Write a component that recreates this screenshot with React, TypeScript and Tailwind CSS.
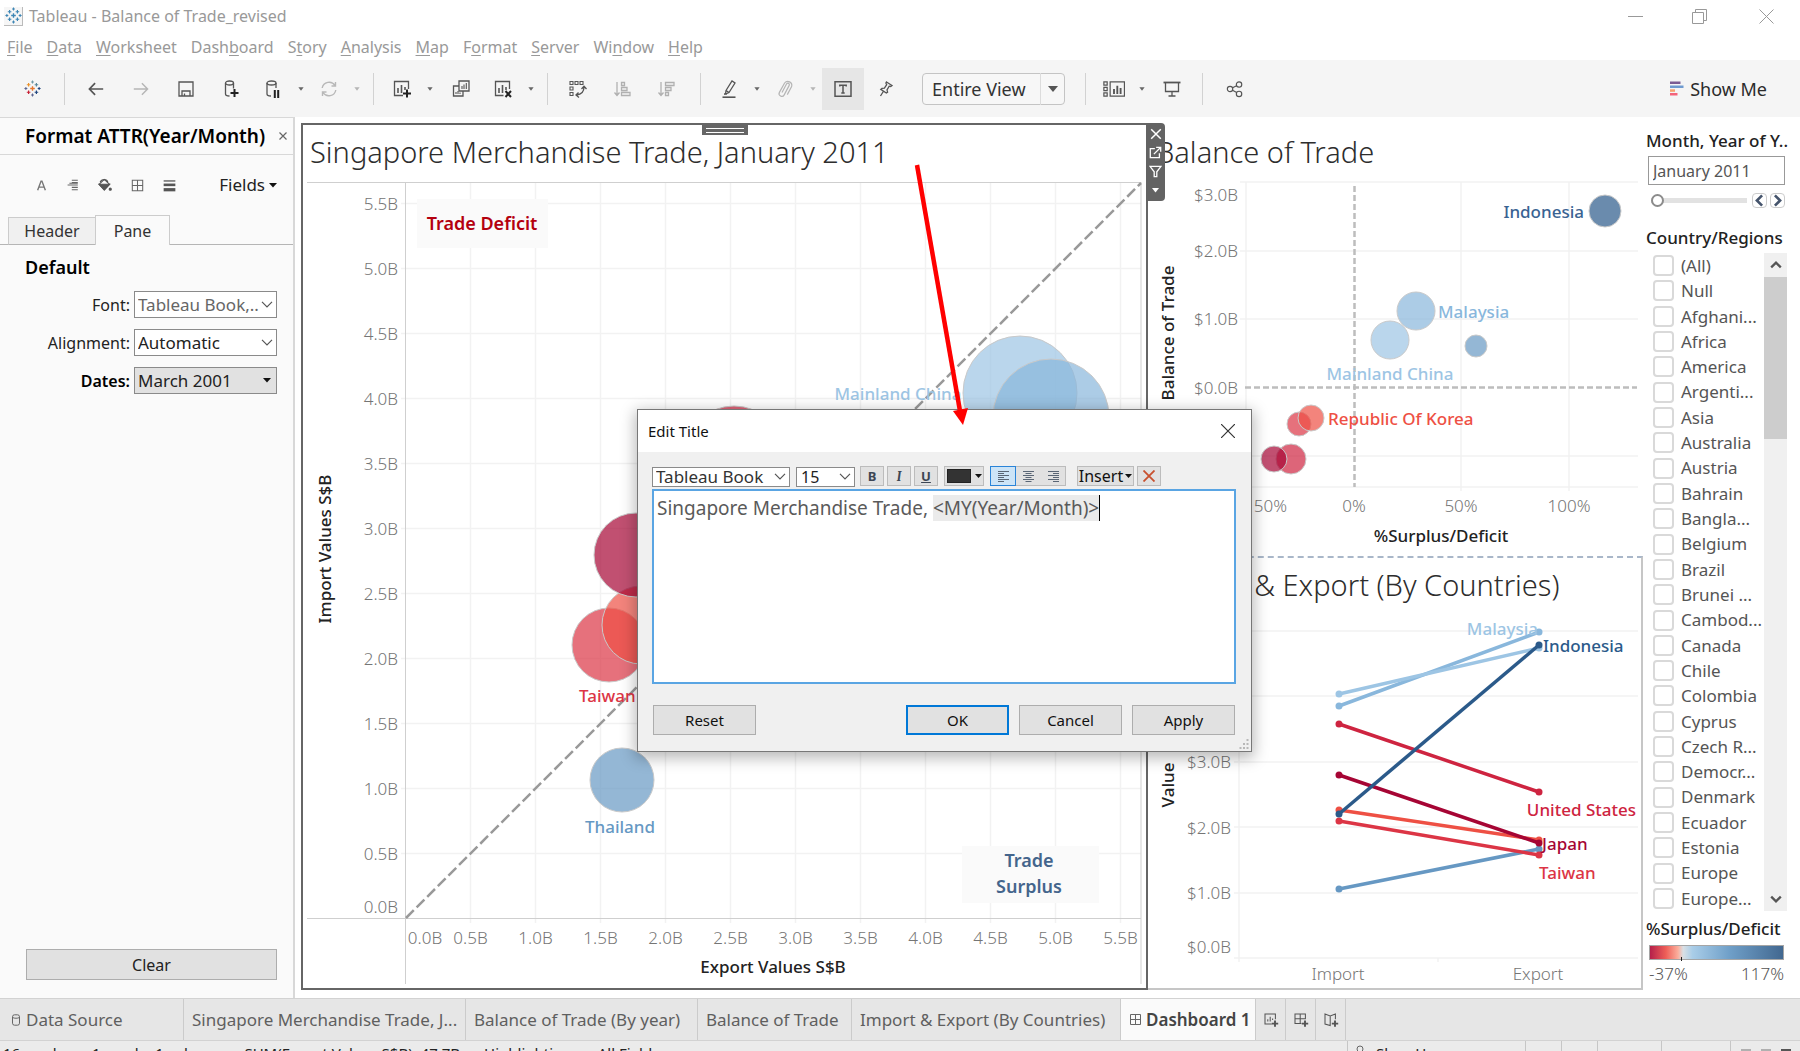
import React from "react";

const COUNTRIES = [
  "(All)", "Null", "Afghani...", "Africa", "America", "Argenti...", "Asia", "Australia", "Austria",
  "Bahrain", "Bangla...", "Belgium", "Brazil", "Brunei ...", "Cambod...", "Canada", "Chile",
  "Colombia", "Cyprus", "Czech R...", "Democr...", "Denmark", "Ecuador", "Estonia", "Europe", "Europe...",
];

const MENU: [string, string, string][] = [
  ["", "F", "ile"], ["", "D", "ata"], ["", "W", "orksheet"], ["Dash", "b", "oard"], ["S", "t", "ory"],
  ["", "A", "nalysis"], ["", "M", "ap"], ["F", "o", "rmat"], ["", "S", "erver"], ["Wi", "n", "dow"], ["", "H", "elp"],
];

type IconProps = { children: React.ReactNode; size?: number; className?: string; sw?: number };

function Icon({ children, size = 20, className = "text-[#555]", sw = 1.3 }: IconProps) {
  return (
    <svg width={size} height={size} viewBox="0 0 20 20" fill="none" stroke="currentColor" strokeWidth={sw} className={className} aria-hidden="true">
      {children}
    </svg>
  );
}

function Plus({ x, y, s, c, w = 1.6 }: { x: number; y: number; s: number; c: string; w?: number }) {
  return <path d={`M${x - s} ${y}H${x + s}M${x} ${y - s}V${y + s}`} stroke={c} strokeWidth={w} />;
}

function TableauLogo({ size, mono = false }: { size: number; mono?: boolean }) {
  const m = "#3d86b5";
  const c = (v: string) => (mono ? m : v);
  return (
    <svg width={size} height={size} viewBox="0 0 20 20" fill="none" aria-hidden="true">
      <Plus x={10} y={10} s={2.7} c={c("#e8762c")} w={1.6} />
      <Plus x={5.4} y={5.6} s={2.1} c={c("#eb9129")} w={1.4} />
      <Plus x={14.6} y={5.6} s={2.1} c={c("#59879b")} w={1.4} />
      <Plus x={5.4} y={14.4} s={2.1} c={c("#c72035")} w={1.4} />
      <Plus x={14.6} y={14.4} s={2.1} c={c("#1f447e")} w={1.4} />
      <Plus x={10} y={2.4} s={1.7} c={c("#7099a6")} w={1.2} />
      <Plus x={10} y={17.6} s={1.7} c={c("#5b6591")} w={1.2} />
      <Plus x={2.2} y={10} s={1.7} c={c("#5b6591")} w={1.2} />
      <Plus x={17.8} y={10} s={1.7} c={c("#1f447e")} w={1.2} />
    </svg>
  );
}

function Tool({ label, w = "w-[45px]", children, active = false }: { label: string; w?: string; children: React.ReactNode; active?: boolean }) {
  return (
    <button type="button" aria-label={label} className={`flex h-[42px] shrink-0 items-center justify-center ${w} ${active ? "ml-px bg-[#e6e6e6]" : ""}`}>
      {children}
    </button>
  );
}

function Caret({ label, faded = false }: { label: string; faded?: boolean }) {
  return (
    <button type="button" aria-label={label} className="flex h-[42px] w-4 shrink-0 items-center justify-center">
      <svg width="6" height="4" viewBox="0 0 6 4" className={faded ? "text-[#b5b5b5]" : "text-[#666]"} aria-hidden="true">
        <path d="M0.4 0.3h5.2L3 3.7z" fill="currentColor" />
      </svg>
    </button>
  );
}

const Sep = () => <div className="mx-2 h-8 w-px shrink-0 bg-[#d2d2d2]" />;

function Toolbar() {
  return (
    <div className="flex h-[57px] shrink-0 items-center bg-[#f5f5f5]">
      <Tool label="Start page" w="w-16"><TableauLogo size={17} /></Tool>
      <div className="mr-2 h-8 w-px shrink-0 bg-[#d2d2d2]" />
      <Tool label="Undo"><Icon size={18} sw={1.9}><path d="M18 10H3M9 3.500L2.700 10 9 16.500" /></Icon></Tool>
      <Tool label="Redo"><Icon size={18} sw={1.6} className="text-[#b5b5b5]"><path d="M2 10h15M11 3.500l6.300 6.500-6.300 6.500" /></Icon></Tool>
      <Tool label="Save"><Icon><path d="M3 3h14v14H3z M6 17v-5h8v5 M8.5 14.5v2.5" /></Icon></Tool>
      <Tool label="New data source">
        <Icon><ellipse cx="8.500" cy="4" rx="4" ry="2" /><path d="M4.500 4v11c0 1 1.500 2 4 2M12.500 4v5.500" /><path d="M13.500 10v8M9.500 14h8" stroke="#222" strokeWidth="2" /></Icon>
      </Tool>
      <Tool label="Pause auto updates" w="w-10">
        <Icon><ellipse cx="8.500" cy="4" rx="4.500" ry="2" /><path d="M4 4v11c0 1 1.500 2 4 2M13 4v5" /><path d="M11.800 11v8M15.200 11v8" stroke="#222" strokeWidth="2" /></Icon>
      </Tool>
      <Caret label="Pause options" />
      <Tool label="Run update" w="w-10">
        <Icon className="text-[#b8b8b8]" sw={1.4}><path d="M3.200 9A7 7 0 0 1 16 6.500M16.800 11A7 7 0 0 1 4 13.500M16.500 3v4h-4M3.500 17v-4h4" /></Icon>
      </Tool>
      <Caret label="Run update options" faded />
      <Sep />
      <Tool label="New worksheet" w="w-10">
        <Icon><path d="M11 16.500H2.500v-14h14V10" /><path d="M6 9v5M9.500 6v8M13 8v3" strokeWidth="1.600" /><path d="M15 10.500v8M11 14.500h8" stroke="#222" strokeWidth="2" /></Icon>
      </Tool>
      <Caret label="New worksheet options" />
      <Tool label="Duplicate sheet">
        <Icon><path d="M8 2h10v10H8z M8 7H2.500v10H12v-5" /><path d="M11 7v3M13 5.500V10M15.300 4v6M5 13v2M7 12v3M9 13.500V15" strokeWidth="1.100" /></Icon>
      </Tool>
      <Tool label="Clear sheet" w="w-10">
        <Icon><path d="M10.500 16.500H2.500v-14h14V10" /><path d="M6 9v5M9.500 6v8M13 8v3" strokeWidth="1.600" /><path d="M12.500 12l5.500 6M18 12l-5.500 6" stroke="#222" strokeWidth="2" /></Icon>
      </Tool>
      <Caret label="Clear sheet options" />
      <Sep />
      <Tool label="Swap rows and columns" w="w-11">
        <Icon><path d="M2 2.500h3v3H2zM7 2.500h3v3H7zM12 2.500h3v3h-3zM2 8h3v3H2zM2 13.500h3v3H2z" strokeWidth="1.100" /><path d="M16 8c0 4.500-3 7.500-7.500 8M13.500 10L16 7.200l2.500 2.800M10.500 13.500L8 16l3 2.500" /></Icon>
      </Tool>
      <Tool label="Sort ascending" w="w-11">
        <Icon className="text-[#b0b0b0]"><path d="M5 3v13M2.500 13.500L5 16.500l2.500-3M9.500 3.500h3v3h-3zM9.500 8.500h5.500v3H9.500zM9.500 13.500h8.500v3H9.500z" /></Icon>
      </Tool>
      <Tool label="Sort descending" w="w-11">
        <Icon className="text-[#b0b0b0]"><path d="M5 3v13M2.500 13.500L5 16.500l2.500-3M9.500 3.500H18v3H9.500zM9.500 8.500h5.500v3H9.500zM9.500 13.500h3v3h-3z" /></Icon>
      </Tool>
      <div className="ml-3 mr-2 h-8 w-px shrink-0 bg-[#d2d2d2]" />
      <Tool label="Highlight" w="w-10">
        <Icon><path d="M7 11.500L13 2l3 2-6 9.500-3.500 1.500zM7 11.500l3 2M5 15h3" /><path d="M3.500 18.200h13" strokeWidth="1.600" /></Icon>
      </Tool>
      <Caret label="Highlight options" />
      <Tool label="Group members" w="w-10">
        <Icon className="text-[#b5b5b5]" sw={1.2}><path d="M7 13.500l4.500-8.500a1.500 1.500 0 0 1 2.700 1.400l-5 9.500a2.700 2.700 0 0 1-4.800-2.500L9.600 4a4 4 0 0 1 7 3.600l-4.300 8" /></Icon>
      </Tool>
      <Caret label="Group options" faded />
      <Tool label="Show mark labels" w="w-[42px]" active>
        <Icon sw={1.5}><path d="M2 2.800h16v14.400H2z" /><path d="M6.800 7.500V6.300h6.400v1.200M10 6.300v7.700M8.300 14h3.400" /></Icon>
      </Tool>
      <Tool label="Fix axes" w="w-11">
        <Icon><path d="M10.500 3l5.500 3.500-1.300 1-1.500-.3-2.200 3.600.6 2.400-1.300.8-5.500-3.600 1.200-1 2.400-.2 2.300-3.500-.8-1.600zM7.300 12.500L4.500 17" /></Icon>
      </Tool>
      <div className="relative ml-3.5 h-8 w-[143px] shrink-0">
        <select aria-label="Fit" defaultValue="e" className="h-full w-full appearance-none rounded-sm border border-[#c4c4c4] bg-[#f7f7f7] pl-[9px] text-lg leading-none text-[#333]">
          <option value="e">Entire View</option>
        </select>
        <span className="pointer-events-none absolute inset-y-0 right-0 flex w-[25px] items-center justify-center border-l border-[#dcdcdc]">
          <svg width="10" height="6" viewBox="0 0 10 6" aria-hidden="true"><path d="M0 0h10L5 6z" fill="#555" /></svg>
        </span>
      </div>
      <div className="ml-5 mr-2 h-8 w-px shrink-0 bg-[#d2d2d2]" />
      <Tool label="Show cards" w="w-10">
        <Icon size={22}><path d="M.8 3.500h3v3h-3zM.8 8.500h3v3h-3zM.8 13.500h3v3h-3zM6.500 3.500h13v13h-13z" strokeWidth="1.100" /><path d="M10 10v4.500M13 7v7.500M16 9v5.500" strokeWidth="1.700" /></Icon>
      </Tool>
      <Caret label="Card options" />
      <Tool label="Presentation mode" w="w-11"><Icon><path d="M1.500 3.500h17" strokeWidth="1.800" /><path d="M3.500 4v8.500h13V4M10 12.500v4M6.500 17h7" /></Icon></Tool>
      <Sep />
      <Tool label="Share" w="w-12">
        <Icon size={18}><circle cx="4.500" cy="10" r="3" /><circle cx="14.500" cy="5" r="3" /><circle cx="14.500" cy="15.500" r="3" /><path d="M7.300 8.700l4.500-2.300M7.200 11.300l4.700 2.700" /></Icon>
      </Tool>
      <button type="button" className="ml-auto mr-[33px] flex items-center gap-1.5 text-lg text-[#2b2b2b]">
        <svg width="14" height="15" viewBox="0 0 14 15" aria-hidden="true">
          <path d="M0 0.500h10.500v2.500H0z" fill="#7b5c93" /><path d="M0 4.500h13.500v2.500H0z" fill="#6f9bd0" /><path d="M0 8.300h5v2.500H0z" fill="#f6a36d" /><path d="M0 12h7.500v2.500H0z" fill="#f4647a" />
        </svg>
        Show Me
      </button>
    </div>
  );
}

function Chevron({ solid = false }: { solid?: boolean }) {
  return (
    <span className="pointer-events-none absolute inset-y-0 right-1 flex w-3 items-center justify-center">
      {solid ? (
        <svg width="8" height="5" viewBox="0 0 8 5" aria-hidden="true"><path d="M0 0h8L4 4.500z" fill="#111" /></svg>
      ) : (
        <svg width="12" height="7" viewBox="0 0 12 7" fill="none" aria-hidden="true"><path d="M1 .8l5 5 5-5" stroke="#555" strokeWidth="1.200" /></svg>
      )}
    </span>
  );
}

function FormatRow({ id, label, value, tone }: { id: string; label: string; value: string; tone: "soft" | "dark" | "button" }) {
  return (
    <div className="flex items-center justify-end">
      <label htmlFor={id} className={`pr-1 ${tone === "button" ? "font-semibold text-black" : "text-[#222]"}`}>{label}</label>
      <div className="relative h-[27px] w-[143px]">
        <select
          id={id}
          defaultValue={value}
          className={`h-full w-full appearance-none border border-[#8a8a8a] pl-[3px] text-[17px] leading-none ${tone === "button" ? "bg-[#e1e1e1] text-[#222]" : tone === "soft" ? "bg-white text-[#666]" : "bg-white text-[#222]"}`}
        >
          <option>{value}</option>
        </select>
        <Chevron solid={tone === "button"} />
      </div>
    </div>
  );
}

function FormatPanel() {
  return (
    <aside className="flex w-[295px] shrink-0 flex-col border-r-2 border-t border-[#d8d8d8] bg-[#fafafa] text-base">
      <div className="flex h-[37px] items-center justify-between border-b border-[#d8d8d8] pl-[25px] pr-1.5">
        <h2 className="whitespace-nowrap text-[19px] leading-6 font-semibold text-black">Format ATTR(Year/Month)</h2>
        <button type="button" aria-label="Close format pane" className="text-[#666]">
          <svg width="8" height="8" viewBox="0 0 8 8" stroke="currentColor" strokeWidth="1.200" aria-hidden="true"><path d="M.5 .5l7 7M7.500 .5l-7 7" /></svg>
        </button>
      </div>
      <div className="flex h-[60px] items-center pl-[25px] pr-4">
        <button type="button" aria-label="Font" className="flex w-8 justify-center"><Icon size={11} sw={2.6} className="text-[#777]"><path d="M3 18.500L9.200 2h1.600L17 18.500M5.500 13h9" /></Icon></button>
        <button type="button" aria-label="Alignment" className="flex w-8 justify-center"><Icon size={12} sw={1.8} className="text-[#666]"><path d="M8 2h10M8 6h10M8 14h10M8 18h10M1 10h17M4 7h14" /></Icon></button>
        <button type="button" aria-label="Shading" className="flex w-8 justify-center"><Icon size={14} sw={1.6} className="text-[#555]"><path d="M1.500 9L9 2l7.500 7L9 17z" /><path d="M1.500 9h15L9 17z" fill="currentColor" /><path d="M3 6c2-5 10-5 11 0" /><circle cx="17.500" cy="16" r="1.500" fill="currentColor" /></Icon></button>
        <button type="button" aria-label="Borders" className="flex w-8 justify-center"><Icon size={13} sw={1.6} className="text-[#666]"><path d="M2 2h16v16H2zM10 2v16M2 10h16" /></Icon></button>
        <button type="button" aria-label="Lines" className="flex w-8 justify-center"><Icon size={13} className="text-[#555]"><path d="M1 3h18" strokeWidth="2" /><path d="M1 9h18" strokeWidth="4" /><path d="M1 16.500h18" strokeWidth="5" /></Icon></button>
        <button type="button" className="ml-auto flex items-center gap-1 text-[17px] text-[#222]">Fields<svg width="8" height="5" viewBox="0 0 8 5" aria-hidden="true"><path d="M0 0h8L4 4.500z" fill="#111" /></svg></button>
      </div>
      <div className="flex h-[30px] items-end text-[#333]" role="tablist">
        <div className="h-full w-2 border-b border-[#b5b5b5]" />
        <button type="button" role="tab" aria-selected="false" className="h-7 w-[87px] border border-r-0 border-[#ccc] border-b-[#b5b5b5] bg-[#f0f0f0]">Header</button>
        <button type="button" role="tab" aria-selected="true" className="h-[30px] w-[75px] border border-b-0 border-[#ccc] bg-[#fafafa]">Pane</button>
        <div className="h-full flex-1 border-b border-[#b5b5b5]" />
      </div>
      <div className="flex flex-col gap-[11px] pl-[25px] pr-4 pt-2.5">
        <h3 className="text-lg leading-[25px] font-semibold text-black">Default</h3>
        <FormatRow id="fmt-font" label="Font:" value="Tableau Book,.." tone="soft" />
        <FormatRow id="fmt-align" label="Alignment:" value="Automatic" tone="dark" />
        <FormatRow id="fmt-dates" label="Dates:" value="March 2001" tone="button" />
      </div>
      <div className="mt-auto pb-[18px] pl-[26px] pr-4">
        <button type="button" className="h-[31px] w-full border border-[#adadad] bg-[#e1e1e1] text-[#222]">Clear</button>
      </div>
    </aside>
  );
}

type Dot = [number, number, number, string];
const Bubble = ({ d }: { d: Dot }) => (
  <circle cx={d[0]} cy={d[1]} r={d[2]} fill={d[3]} fillOpacity={0.7} stroke="#c9c9c9" strokeWidth={1} />
);

const C = {
  china: "#9dc5e4", malaysia: "#89b7dc", thailand: "#6698c3", indonesia: "#2b5a8a",
  us: "#ce2440", taiwan: "#dc3545", korea: "#ee5044", japan: "#a60534",
};

function ScatterChart() {
  const ticks = [0, 0.5, 1, 1.5, 2, 2.5, 3, 3.5, 4, 4.5, 5, 5.5];
  const px = (v: number) => 405.5 + v * 130;
  const py = (v: number) => 918.5 - v * 130;
  return (
    <svg viewBox="303 177 843 811" className="min-h-0 w-full flex-1 text-[17px]" role="img" aria-label="Import values against export values">
      <g stroke="#f2f2f2" strokeWidth="1.500">
        {ticks.slice(1).map((t) => <path key={t} d={`M${px(t)} 182V923M401 ${py(t)}H1141`} />)}
      </g>
      <path d="M307 182.500H1141M307 918.500H1141M405.500 182V984M1141 182V984" stroke="#cfcfcf" fill="none" />
      <rect x="417" y="199" width="131" height="49" fill="#fafafa" />
      <rect x="962" y="846" width="137" height="57" fill="#fafafa" />
      <g fill="#757575" fontWeight="300">
        {ticks.map((t) => (
          <text key={`y${t}`} x="398" y={t === 0 ? 913 : py(t) + 6} textAnchor="end">{t.toFixed(1)}B</text>
        ))}
        {ticks.map((t) => (
          <text key={`x${t}`} x={t === 0 ? 425 : px(t)} y="944" textAnchor="middle">{t.toFixed(1)}B</text>
        ))}
      </g>
      <path d="M406 918L1141 183" stroke="#999" strokeWidth="2.500" strokeDasharray="11 4" />
      {([
        [609, 645, 37, C.taiwan], [641, 625, 39, C.korea], [636, 555, 42, C.japan], [734, 456, 50, C.us],
        [1020, 393, 57, C.china], [1051, 417, 58, C.malaysia], [622, 780, 32, C.thailand],
      ] as Dot[]).map((d, i) => <Bubble key={i} d={d} />)}
      <g fontWeight="500">
        <text x="620" y="833" textAnchor="middle" fill={C.thailand}>Thailand</text>
        <text x="579" y="702" fill={C.taiwan}>Taiwan</text>
        <text x="898" y="400" textAnchor="middle" fill={C.china}>Mainland China</text>
      </g>
      <g fontWeight="600" textAnchor="middle" fontSize="18">
        <text x="482" y="230" fill="#b4000f">Trade Deficit</text>
        <text x="1029" y="867" fill="#44658c">Trade</text>
        <text x="1029" y="893" fill="#44658c">Surplus</text>
      </g>
      <g fontWeight="500" textAnchor="middle" fill="#222">
        <text x="773" y="973">Export Values S$B</text>
        <text transform="translate(331 549) rotate(-90)">Import Values S$B</text>
      </g>
    </svg>
  );
}

function BalanceChart() {
  return (
    <svg viewBox="1148 177 495 379" className="min-h-0 w-full flex-1 text-[17px]" role="img" aria-label="Balance of trade against surplus percentage">
      <path d="M1240 182H1638M1240 251H1638M1240 319H1638M1240 456H1638M1246 487H1638M1246 182V491M1461 182V491M1569 182V491" stroke="#f2f2f2" strokeWidth="1.500" fill="none" />
      <path d="M1245 387.500H1637M1354.500 186V487" stroke="#bdbdbd" strokeWidth="2.500" strokeDasharray="6 3" fill="none" />
      <g fill="#757575" fontWeight="300">
        <text x="1238" y="201" textAnchor="end">$3.0B</text>
        <text x="1238" y="257" textAnchor="end">$2.0B</text>
        <text x="1238" y="325" textAnchor="end">$1.0B</text>
        <text x="1238" y="394" textAnchor="end">$0.0B</text>
        <text x="1287" y="512" textAnchor="end">50%</text>
        <text x="1354" y="512" textAnchor="middle">0%</text>
        <text x="1461" y="512" textAnchor="middle">50%</text>
        <text x="1569" y="512" textAnchor="middle">100%</text>
      </g>
      {([
        [1605, 211, 16, C.indonesia], [1416, 311, 19, C.malaysia], [1390, 340, 19, C.china], [1476, 346, 11, C.thailand],
        [1299, 424, 12, C.taiwan], [1311, 418, 13, C.korea], [1291, 459, 15, C.us], [1274, 459, 13, C.japan],
      ] as Dot[]).map((d, i) => <Bubble key={i} d={d} />)}
      <g fontWeight="500">
        <text x="1584" y="218" textAnchor="end" fill="#3a6392">Indonesia</text>
        <text x="1438" y="318" fill={C.malaysia}>Malaysia</text>
        <text x="1390" y="380" textAnchor="middle" fill={C.china}>Mainland China</text>
        <text x="1328" y="425" fill={C.korea}>Republic Of Korea</text>
      </g>
      <g fontWeight="500" textAnchor="middle" fill="#222">
        <text x="1441" y="542">%Surplus/Deficit</text>
        <text transform="translate(1174 333) rotate(-90)">Balance of Trade</text>
      </g>
    </svg>
  );
}

function SlopeChart() {
  const lines: [string, number, number][] = [
    [C.malaysia, 706, 632], [C.china, 694, 648], [C.thailand, 889, 849], [C.us, 724, 792],
    [C.korea, 810, 840], [C.japan, 775, 843], [C.taiwan, 821, 855], [C.indonesia, 814, 645],
  ];
  return (
    <svg viewBox="1148 611 493 377" className="min-h-0 w-full flex-1 text-[17px]" role="img" aria-label="Import and export by country">
      <path d="M1234 631H1638M1234 696H1638M1234 762H1638M1234 827H1638M1234 893H1638M1234 958H1638M1239 620V962M1438 958V962" stroke="#f2f2f2" strokeWidth="1.500" fill="none" />
      <g fill="#757575" fontWeight="300">
        {[["$3.0B", 768], ["$2.0B", 834], ["$1.0B", 899], ["$0.0B", 953]].map(([t, y]) => (
          <text key={t} x="1231" y={y} textAnchor="end">{t}</text>
        ))}
        <text x="1338" y="980" textAnchor="middle">Import</text>
        <text x="1538" y="980" textAnchor="middle">Export</text>
      </g>
      {lines.map(([c, a, b]) => (
        <g key={c} fill={c}>
          <path d={`M1339 ${a}L1539 ${b}`} stroke={c} strokeWidth="3.500" />
          <circle cx="1339" cy={a} r="3.500" /><circle cx="1539" cy={b} r="3.500" />
        </g>
      ))}
      <g fontWeight="500">
        <text x="1538" y="635" textAnchor="end" fill={C.china}>Malaysia</text>
        <text x="1543" y="652" fill={C.indonesia}>Indonesia</text>
        <text x="1636" y="816" textAnchor="end" fill={C.us}>United States</text>
        <text x="1542" y="850" fill={C.japan}>Japan</text>
        <text x="1539" y="879" fill={C.taiwan}>Taiwan</text>
        <text transform="translate(1174 785) rotate(-90)" textAnchor="middle" fill="#222">Value</text>
      </g>
    </svg>
  );
}

function Dashboard() {
  return (
    <main className="grid min-w-0 flex-1 grid-cols-[847fr_495fr] grid-rows-[433fr_434fr] pb-2 pl-1.5 pt-1.5">
      <section className="relative row-span-2 flex min-h-0 flex-col border-2 border-[#666]">
        <h1 className="h-[52px] whitespace-nowrap pl-[7px] pt-px text-[29px] leading-[52px] font-light text-[#2d2d2d]">Singapore Merchandise Trade, January 2011</h1>
        <ScatterChart />
        <div className="absolute left-1/2 top-0 flex h-2.5 w-[46px] -translate-x-1/2 flex-col justify-center gap-[3px] bg-[#666] px-1">
          <span className="h-px bg-white" /><span className="h-px bg-white" />
        </div>
        <div className="absolute left-full -top-0.5 z-10 flex h-[78px] w-[19px] flex-col items-center justify-around rounded-r-sm bg-[#636363] py-0.5">
          <button type="button" aria-label="Remove from dashboard"><Icon size={12} sw={2.5} className="text-white"><path d="M2 2l16 16M18 2L2 18" /></Icon></button>
          <button type="button" aria-label="Go to sheet"><Icon size={13} sw={2} className="text-white"><path d="M9 4H2v14h14v-7M7.500 12.500L17 3M11 2h7v7" /></Icon></button>
          <button type="button" aria-label="Use as filter"><Icon size={13} sw={2} className="text-white"><path d="M1.500 2h17L12 10.500V18H8v-7.500z" /></Icon></button>
          <button type="button" aria-label="More options" className="flex h-3 items-center"><svg width="7" height="5" viewBox="0 0 7 5" aria-hidden="true"><path d="M0 0h7L3.500 4.500z" fill="#fff" /></svg></button>
        </div>
      </section>
      <section className="flex min-h-0 flex-col">
        <h2 className="h-[54px] whitespace-nowrap pl-2 pt-[3px] text-[29px] leading-[52px] font-light text-[#2d2d2d]">Balance of Trade</h2>
        <BalanceChart />
      </section>
      <section className="flex min-h-0 flex-col border-b-2 border-r-2 border-t-2 border-[#c6c6c6] border-t-[#a9b7c9] [border-top-style:dashed]">
        <h2 className="h-[53px] whitespace-nowrap pl-2 pt-px text-[29px] leading-[52px] font-light text-[#2d2d2d]">Import &amp; Export (By Countries)</h2>
        <SlopeChart />
      </section>
    </main>
  );
}

function Filters() {
  return (
    <aside className="flex w-[157px] shrink-0 flex-col pb-3 pl-[3px] pr-[13px] pt-3 text-[17px] text-[#555]">
      <h3 className="whitespace-nowrap font-medium leading-6 text-[#222]"><label htmlFor="month">Month, Year of Y..</label></h3>
      <input id="month" defaultValue="January 2011" className="ml-0.5 mt-[3px] h-[29px] w-[137px] border border-[#999] bg-white pl-1 text-base text-[#555]" />
      <div className="ml-0.5 flex h-[30px] w-[137px] items-center">
        <input type="range" aria-label="Month" min={0} max={100} defaultValue={0} className="h-4 w-[99px] appearance-none bg-transparent pl-[3px] [&::-webkit-slider-runnable-track]:h-[5px] [&::-webkit-slider-runnable-track]:bg-[#e2e2e2] [&::-webkit-slider-thumb]:-mt-1 [&::-webkit-slider-thumb]:size-[13px] [&::-webkit-slider-thumb]:appearance-none [&::-webkit-slider-thumb]:rounded-full [&::-webkit-slider-thumb]:border-2 [&::-webkit-slider-thumb]:border-[#8c8c8c] [&::-webkit-slider-thumb]:bg-white" />
        <button type="button" aria-label="Previous month" className="ml-auto flex size-[15px] items-center justify-center rounded-sm border border-[#ccc]"><Icon size={13} sw={4} className="shrink-0 text-[#45546c]"><path d="M14 2L6 10l8 8" /></Icon></button>
        <button type="button" aria-label="Next month" className="ml-[3px] flex size-[15px] items-center justify-center rounded-sm border border-[#ccc]"><Icon size={13} sw={4} className="shrink-0 text-[#45546c]"><path d="M6 2l8 8-8 8" /></Icon></button>
      </div>
      <h3 className="mt-[11px] whitespace-nowrap font-medium leading-6 text-[#222]">Country/Regions</h3>
      <div className="mt-[3px] flex min-h-0 flex-1">
        <ul className="flex min-w-0 flex-1 flex-col pl-[7px]">
          {COUNTRIES.map((c) => (
            <li key={c} className="min-h-0 flex-1">
              <label className="flex h-full items-center gap-[7px] whitespace-nowrap">
                <input type="checkbox" className="size-[21px] shrink-0 appearance-none rounded-sm border-2 border-[#d9d9d9] bg-white" />
                {c}
              </label>
            </li>
          ))}
        </ul>
        <div className="flex w-[23px] shrink-0 flex-col bg-[#f0f0f0]">
          <button type="button" aria-label="Scroll up" className="flex h-6 items-center justify-center"><Icon size={12} sw={3.8}><path d="M2 14l8-8 8 8" /></Icon></button>
          <div className="h-[162px] bg-[#cdcdcd]" />
          <button type="button" aria-label="Scroll down" className="mt-auto flex h-6 items-center justify-center"><Icon size={12} sw={3.8}><path d="M2 6l8 8 8-8" /></Icon></button>
        </div>
      </div>
      <h3 className="mt-1.5 whitespace-nowrap font-medium leading-6 text-[#222]">%Surplus/Deficit</h3>
      <div className="relative ml-[3px] mt-1 h-[15px] w-[135px] border border-[#a5a5a5] bg-[linear-gradient(to_right,#b5204a_0%,#ee5f58_12%,#fbae9c_21%,#d9dfe4_25%,#a9cde8_32%,#6f9fc8_60%,#426890_100%)]">
        <span className="absolute -bottom-0.5 left-[31px] h-1 w-px bg-[#222]" />
      </div>
      <div className="ml-[3px] mt-0.5 flex w-[135px] justify-between leading-6 font-light"><span>-37%</span><span>117%</span></div>
    </aside>
  );
}

const formatBtn = "flex h-5 items-center justify-center border border-[#bcbcbc] bg-[#e1e1e1] text-[13px] font-bold leading-none text-[#3c4654]";

function AlignIcon({ x }: { x: number }) {
  return (
    <svg width="11" height="11" viewBox="0 0 11 11" stroke="#5a6675" aria-hidden="true">
      <path d={`M0 .5h11M${x} 2.500h6M0 4.500h11M${x} 6.500h6M0 8.500h11M${x} 10.500h6`} />
    </svg>
  );
}

function EditTitleDialog() {
  return (
    <div role="dialog" aria-labelledby="dlg-title" className="absolute left-[637px] top-[409px] z-20 flex w-[615px] flex-col border border-[#777] bg-[#f0f0f0] text-[15px] text-[#111] shadow-[0_4px_14px_2px_rgba(0,0,0,0.28)]">
      <div className="flex h-[42px] items-center justify-between bg-white pl-2.5 pr-4">
        <h2 id="dlg-title">Edit Title</h2>
        <button type="button" aria-label="Close">
          <svg width="14" height="14" viewBox="0 0 14 14" stroke="#333" strokeWidth="1.200" aria-hidden="true"><path d="M0 0l14 14M14 0L0 14" /></svg>
        </button>
      </div>
      <div className="pb-4 pl-3.5 pr-[15px] pt-3.5">
        <div className="flex items-center">
          <div className="relative h-5 w-[138px]">
            <select aria-label="Font family" className="h-full w-full appearance-none border border-[#8a8a8a] bg-white pl-[3px] text-[17px] leading-none text-[#333]"><option>Tableau Book</option></select>
            <Chevron />
          </div>
          <div className="relative ml-1.5 h-5 w-[59px]">
            <select aria-label="Font size" className="h-full w-full appearance-none border border-[#8a8a8a] bg-white pl-1 text-base leading-none text-[#222]"><option>15</option></select>
            <Chevron />
          </div>
          <button type="button" aria-label="Bold" className={`${formatBtn} ml-[5px] w-6`}>B</button>
          <button type="button" aria-label="Italic" className={`${formatBtn} ml-[3px] w-6 font-serif italic`}>I</button>
          <button type="button" aria-label="Underline" className={`${formatBtn} ml-[3px] w-6 underline`}>U</button>
          <button type="button" aria-label="Text colour" className={`${formatBtn} ml-1.5 w-10 gap-1`}>
            <span className="h-3.5 w-6 border border-[#222] bg-[#333]" />
            <svg width="7" height="4" viewBox="0 0 7 4" aria-hidden="true"><path d="M0 0h7L3.500 4z" fill="#111" /></svg>
          </button>
          <button type="button" aria-label="Align left" className="ml-1.5 flex h-5 w-[26px] items-center justify-center border border-[#2a84d8] bg-[#cce4f7]"><AlignIcon x={0} /></button>
          <button type="button" aria-label="Align centre" className={`${formatBtn} w-[25px] border-x-0`}><AlignIcon x={2.5} /></button>
          <button type="button" aria-label="Align right" className={`${formatBtn} w-[25px] border-l-0`}><AlignIcon x={5} /></button>
          <button type="button" className="ml-[11px] flex h-5 w-[57px] items-center justify-center gap-0.5 border border-[#bcbcbc] bg-[#e1e1e1] text-base leading-none">
            Insert
            <svg width="7" height="4" viewBox="0 0 7 4" aria-hidden="true"><path d="M0 0h7L3.500 4z" fill="#111" /></svg>
          </button>
          <button type="button" aria-label="Clear formatting" className={`${formatBtn} ml-[3px] w-6`}>
            <svg width="12" height="12" viewBox="0 0 12 12" stroke="#c8502e" strokeWidth="1.800" aria-hidden="true"><path d="M.5 .5l11 11M11.500 .5l-11 11" /></svg>
          </button>
        </div>
        <div role="textbox" aria-label="Title text" aria-multiline="true" contentEditable suppressContentEditableWarning className="mt-[3px] flex h-[195px] items-start whitespace-pre border-2 border-[#5aa5e3] bg-white px-[3px] pt-1 text-[19px] leading-[26px] text-[#5a5a5a]">
          <span>{"Singapore Merchandise Trade, "}</span>
          <span className="border-r border-black bg-[#ebebeb]">&lt;MY(Year/Month)&gt;</span>
        </div>
        <div className="mt-[21px] flex gap-2.5 pl-px pr-px">
          <button type="button" className="mr-auto h-[30px] w-[103px] border border-[#adadad] bg-[#e1e1e1]">Reset</button>
          <button type="button" className="h-[30px] w-[103px] border-2 border-[#0078d7] bg-[#e1e1e1]">OK</button>
          <button type="button" className="h-[30px] w-[103px] border border-[#adadad] bg-[#e1e1e1]">Cancel</button>
          <button type="button" className="h-[30px] w-[103px] border border-[#adadad] bg-[#e1e1e1]">Apply</button>
        </div>
      </div>
      <svg width="10" height="10" viewBox="0 0 10 10" className="absolute bottom-0.5 right-0.5" fill="#b8b8b8" aria-hidden="true">
        <path d="M7.500 0h2v2h-2zM7.500 4h2v2h-2zM7.500 8h2v2h-2zM4 4h2v2H4zM4 8h2v2H4zM.5 8h2v2h-2z" />
      </svg>
    </div>
  );
}

function SheetTabs() {
  const tab = "flex shrink-0 items-center border-r border-[#cbcbcb] whitespace-nowrap";
  return (
    <nav aria-label="Sheets" className="flex h-[43px] shrink-0 border-y border-[#d2d2d2] bg-[#e6e6e6] text-[17px] text-[#5f5f5f]">
      <button type="button" className={`${tab} w-[184px] gap-1.5 pl-3`}>
        <svg width="8" height="12" viewBox="0 0 8 12" fill="none" stroke="#666" aria-hidden="true"><rect x=".5" y=".8" width="7" height="10.400" rx="2" /><path d="M.5 3.500c2 1 5 1 7 0" /></svg>
        Data Source
      </button>
      <button type="button" className={`${tab} w-[282px] pl-2`}>Singapore Merchandise Trade, J...</button>
      <button type="button" className={`${tab} w-[232px] pl-2`}>Balance of Trade (By year)</button>
      <button type="button" className={`${tab} w-[154px] pl-2`}>Balance of Trade</button>
      <button type="button" className={`${tab} w-[269px] pl-2`}>Import &amp; Export (By Countries)</button>
      <button type="button" aria-current="page" className={`${tab} w-[135px] gap-[5px] bg-[#fafafa] pl-[9px] font-semibold text-[#444]`}>
        <svg width="11" height="11" viewBox="0 0 11 11" fill="none" stroke="#666" aria-hidden="true"><path d="M.5 .5h10v10H.5zM5.500 .5v10M.5 5.500h10" /></svg>
        Dashboard 1
      </button>
      <button type="button" aria-label="New worksheet" className={`${tab} w-[30px] justify-center`}><Icon size={16}><path d="M11 15H2.500V2.500h13V9M6 9v3M9 6v6M12 8v2" /><path d="M15 10.500v8M11 14.500h8" strokeWidth="2.400" /></Icon></button>
      <button type="button" aria-label="New dashboard" className={`${tab} w-[30px] justify-center`}><Icon size={16}><path d="M10.500 14.500h-8v-12h13V9M9 2.500v12M2.500 8.500h13" /><path d="M15 10.500v8M11 14.500h8" strokeWidth="2.400" /></Icon></button>
      <button type="button" aria-label="New story" className={`${tab} w-[30px] justify-center`}><Icon size={16}><path d="M9 5v12l-6.500-2V2.500L9 5l6.500-2.500V9" /><path d="M15 10.500v8M11 14.500h8" strokeWidth="2.400" /></Icon></button>
    </nav>
  );
}

function StatusBar() {
  return (
    <footer className="flex h-2.5 shrink-0 items-start overflow-hidden whitespace-nowrap bg-[#ebebeb] text-[15px] leading-6 text-[#222]">
      <div className="flex flex-1 gap-6 pl-[3px]"><span>16 marks</span><span>1 row by 1 column</span><span>SUM(Export Values S$B): 47.7B</span><span>Highlighting on All Fields</span></div>
      <div className="flex h-full w-[178px] items-start gap-3 border-l border-[#c6c6c6] pl-2">
        <svg width="8" height="16" viewBox="0 0 8 16" fill="none" stroke="#666" className="mt-1 shrink-0" aria-hidden="true"><circle cx="4" cy="4" r="3" /><path d="M1 15c0-8 6-8 6 0" /></svg>
        Shen Hong
      </div>
      <div className="h-full w-9 border-l border-[#c6c6c6]" />
      <div className="h-full w-9 border-l border-[#c6c6c6]" />
      <div className="h-full w-16 border-l border-[#c6c6c6]" />
      <div className="h-full w-[69px] border-l border-[#c6c6c6]" />
      <div className="flex h-full w-[70px] items-start justify-center gap-2.5 border-l border-[#c6c6c6] pt-2">
        <span className="h-3 w-2.5 bg-[#b0b0b0]" /><span className="h-3 w-2.5 bg-[#b0b0b0]" /><span className="h-3 w-2.5 bg-[#555]" />
      </div>
    </footer>
  );
}

export default function App() {
  return (
    <div className="relative flex h-screen flex-col overflow-hidden bg-white font-['Noto_Sans','Open_Sans',sans-serif]">
      <header className="flex h-8 shrink-0 items-center gap-1 pl-1 text-[#999]">
        <span className="flex size-[19px] items-center justify-center border-b border-r border-[#bbb] bg-[#f6f6f6]"><TableauLogo size={17} mono /></span>
        <span className="flex-1 pl-0.5 text-base">Tableau - Balance of Trade_revised</span>
        <div className="flex">
          <button type="button" aria-label="Minimize" className="flex w-[62px] justify-center"><svg width="15" height="15" viewBox="0 0 15 15" stroke="#999" aria-hidden="true"><path d="M0 7.500h15" /></svg></button>
          <button type="button" aria-label="Restore" className="flex w-[66px] justify-center"><svg width="15" height="15" viewBox="0 0 15 15" fill="none" stroke="#999" aria-hidden="true"><path d="M.5 3.500h11v11H.5zM3.500 3V.5h11v11H12" /></svg></button>
          <button type="button" aria-label="Close window" className="flex w-[68px] justify-center"><svg width="15" height="15" viewBox="0 0 15 15" stroke="#999" aria-hidden="true"><path d="M.5 .5l14 14M14.500 .5l-14 14" /></svg></button>
        </div>
      </header>
      <nav aria-label="Menu" className="flex h-7 shrink-0 items-center gap-3.5 pl-[7px] pt-0.5 text-base text-[#999]">
        {MENU.map(([a, b, c]) => (
          <button type="button" key={a + b + c}>{a}<span className="underline underline-offset-2">{b}</span>{c}</button>
        ))}
      </nav>
      <Toolbar />
      <div className="flex min-h-0 flex-1">
        <FormatPanel />
        <Dashboard />
        <Filters />
      </div>
      <SheetTabs />
      <StatusBar />
      <EditTitleDialog />
      <svg width="60" height="270" viewBox="910 160 60 270" className="pointer-events-none absolute left-[910px] top-40 z-30" aria-hidden="true">
        <path d="M917 165L960 411" stroke="#f00" strokeWidth="4.500" /><path d="M953 411l15-3-5 17z" fill="#f00" />
      </svg>
    </div>
  );
}
